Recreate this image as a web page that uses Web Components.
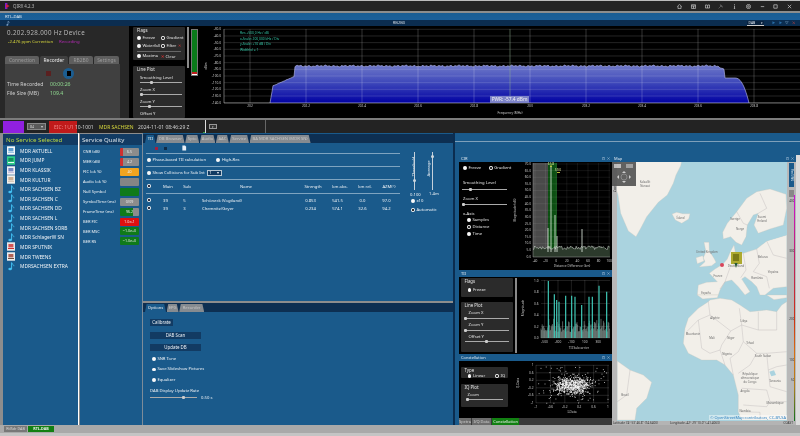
<!DOCTYPE html>
<html lang="en">
<head>
<meta charset="utf-8">
<title>QIRX 4.2.3</title>
<style>
  html, body { margin: 0; padding: 0; background: #c4c4c4; }
  body {
    width: 800px;
    height: 436px;
    overflow: hidden;
    display: flex;
    flex-direction: column;
    font-family: "Noto Sans", "Liberation Sans", sans-serif;
    font-size: 4.2px;
    color: #eeeeee;
    /* the reference is a scaled-down capture, everything in it is a little soft */
    filter: blur(0.3px);
  }
</style>
</head>
<body>
  <qx-title-bar title="QIRX 4.2.3"></qx-title-bar>
  <qx-device-bar title="RTL-DAB" chart="RB2B0"></qx-device-bar>
  <qx-top-panel></qx-top-panel>
  <qx-info-strip></qx-info-strip>
  <qx-workspace>
    <qx-service-list slot="services"></qx-service-list>
    <qx-quality slot="quality"></qx-quality>
    <qx-tii-tab slot="top"></qx-tii-tab>
    <qx-options-tab slot="bottom"></qx-options-tab>
    <qx-docks slot="docks"></qx-docks>
  </qx-workspace>
  <qx-status-bar></qx-status-bar>

<script>
// small seeded generator, so the charts come out the same on every run
const makeRandom = (seed) => () => {
  seed = (seed + 0x6d2b79f5) | 0;
  let t = Math.imul(seed ^ (seed >>> 15), 1 | seed);
  t = (t + Math.imul(t ^ (t >>> 7), 61 | t)) ^ t;
  return ((t ^ (t >>> 14)) >>> 0) / 4294967296;
};

const svgText = (x, y, text, attrs = "") =>
  `<text x="${x}" y="${y}" ${attrs}>${text}</text>`;

class QxElement extends HTMLElement {
  connectedCallback() {
    const root = this.shadowRoot ?? this.attachShadow({ mode: "open" });
    root.innerHTML = `<style>${this.styles()}</style>${this.markup()}`;
  }
  styles() {
    return ":host { display: block; }";
  }
  markup() {
    return "<slot></slot>";
  }
}

class QxRadio extends QxElement {
  styles() {
    return `
      :host { display: inline-flex; align-items: center; gap: 1.6px; line-height: 1; white-space: nowrap; }
      i { width: 3.8px; height: 3.8px; border-radius: 50%; background: #f8f8f8; display: block; flex: none; }
      i.on { background: radial-gradient(circle, #333 0 0.9px, #f4f4f4 1.2px); }
    `;
  }
  markup() {
    return `<i class="${this.hasAttribute("on") ? "on" : ""}"></i><slot></slot>`;
  }
}

class QxSlider extends QxElement {
  styles() {
    return `
      :host { display: block; height: 3px; position: relative; }
      b { position: absolute; left: 0; right: 0; top: 1px; height: 1px; background: #aaa; }
      i { position: absolute; top: 0; width: 3px; height: 3px; background: #ccc; border-radius: 1px; margin-left: -1.5px; }
    `;
  }
  markup() {
    return `<b></b><i style="left:${this.getAttribute("pos") ?? 0}%"></i>`;
  }
}

class QxGroup extends QxElement {
  styles() {
    return `
      :host { display: flex; flex-direction: column; background: #2b2b2b; border-radius: 1px; padding: 1px 4px; box-sizing: border-box; color: #e2e2e2; }
      h4 { margin: 0; font: inherit; font-size: 4.4px; line-height: 5px; }
    `;
  }
  markup() {
    return `<h4>${this.getAttribute("label") ?? ""}</h4><slot></slot>`;
  }
}

class QxTitleBar extends QxElement {
  styles() {
    return `
      :host { display: flex; height: 10px; align-items: center; background: #232323; border-top: 1px solid #bbb; border-bottom: 2px solid #8d8d8d; color: #b8b8b8; font-size: 4.4px; }
      .logo { margin-left: 5px; margin-right: 3px; width: 5px; height: 6px; }
      .tools { margin-left: auto; display: flex; margin-right: 8px; }
      .tools svg { width: 5px; height: 5px; margin-left: 8.75px; stroke: #c8c8c8; fill: none; stroke-width: .7; }
    `;
  }
  markup() {
    return `
      <svg class="logo" viewBox="0 0 5 6"><rect x="0" y="0" width="2.4" height="6" fill="#7a1fc8"/><path d="M1 1 L4.6 3 L1 5 Z" fill="#d02040"/></svg>
      ${this.getAttribute("title")}
      <div class="tools">
        <svg viewBox="0 0 5 5"><path d="M.4 2.4 2.5 .4 4.6 2.4M1 2v2.6h3V2"/></svg>
        <svg viewBox="0 0 5 5"><path d="M.4.8h4.2v3.6H.4zM.4 2h4.2M2.5 2v2.4"/></svg>
        <svg viewBox="0 0 5 5"><path d="M.4 1h1.8l.3.4.3-.4h1.8v3H.4zM2.5 1.4V4"/></svg>
        <svg viewBox="0 0 5 5" style="opacity:.45"><path d="M.6 4.4 3 2M3 2 2.2.8 3.8 1.6 4.4 3.2Z"/></svg>
        <svg viewBox="0 0 5 5"><path d="M2.5 0v.8M2.5 1.6v3.2M1.8 4.8h1.4"/></svg>
        <svg viewBox="0 0 5 5"><circle cx="2.5" cy="2.5" r="2.1"/><circle cx="2.5" cy="2.5" r=".8"/></svg>
        <svg viewBox="0 0 5 5"><path d="M.8 2.6h3.4"/></svg>
        <svg viewBox="0 0 5 5"><path d="M.8.8h3.4v3.4H.8z"/></svg>
        <svg viewBox="0 0 5 5"><path d="M.8.8l3.4 3.4M4.2.8.8 4.2"/></svg>
      </div>
    `;
  }
}

class QxDeviceBar extends QxElement {
  styles() {
    return `
      :host { display: block; color: #dfe8f0; }
      .top { height: 7px; line-height: 7px; padding-left: 5px; background: linear-gradient(#1a5d93, #1c609a); font-size: 4.2px; }
      .sub { height: 6px; background: #0b2d50; display: flex; align-items: center; position: relative; }
      .note { margin-left: 6px; width: 4px; height: 5px; }
      .chart { position: absolute; left: 399px; top: 0; line-height: 6px; transform: translateX(-50%); font-size: 4px; color: #cfd8e0; }
      .sel { margin-left: auto; width: 17px; height: 5px; box-sizing: border-box; border-bottom: .5px solid #ccc; background: #0a2340; font-size: 3.4px; line-height: 4.6px; display: flex; justify-content: space-between; padding: 0 1.5px; }
      .btns { display: flex; margin: 0 5px 0 8px; gap: 3px; }
      .btns svg { width: 3.5px; height: 3.5px; }
    `;
  }
  markup() {
    return `
      <div class="top">${this.getAttribute("title")}</div>
      <div class="sub">
        <svg class="note" viewBox="0 0 4 5"><path d="M2 .3v3.4" stroke="#9fc4e8" stroke-width=".5"/><path d="M2 .3 3.6 1.4" stroke="#9fc4e8" stroke-width=".5"/><ellipse cx="1.3" cy="3.9" rx=".9" ry=".7" fill="#9fc4e8"/></svg>
        <span class="chart">${this.getAttribute("chart")}</span>
        <span class="sel">DAB<span>▾</span></span>
        <span class="btns">
          <svg viewBox="0 0 4 4"><path d="M.5.3 3.5 2 .5 3.7Z" fill="#2a6fa8"/></svg>
          <svg viewBox="0 0 4 4"><path d="M.5.3 3.5 2 .5 3.7Z" fill="#2a6fa8"/></svg>
          <svg viewBox="0 0 4 4"><path d="M.3.5h3.4M.3.5 2 3.5 3.7.5" stroke="#6a90b0" fill="none" stroke-width=".5"/></svg>
          <svg viewBox="0 0 4 4"><path d="M.5.5l3 3M3.5.5l-3 3" stroke="#b04040" stroke-width=".6"/></svg>
        </span>
      </div>
    `;
  }
}

class QxTopPanel extends QxElement {
  styles() {
    return `
      :host { display: flex; height: 92px; background: #000; border-bottom: 2px solid #7c7c7c; }
      qx-device-panel { flex: none; width: 129px; }
      qx-flags-panel { flex: none; width: 60px; }
      qx-level-bar { flex: none; width: 10px; }
      qx-spectrum { flex: 1; }
    `;
  }
  markup() {
    return `<qx-device-panel></qx-device-panel><qx-flags-panel></qx-flags-panel><qx-level-bar></qx-level-bar><qx-spectrum></qx-spectrum>`;
  }
}

class QxDevicePanel extends QxElement {
  styles() {
    return `
      :host { display: flex; flex-direction: column; background: #282828; overflow: hidden; }
      .head { height: 30px; box-sizing: border-box; padding: 3px 0 0 7px; }
      .freq { font-size: 6.2px; line-height: 8px; color: #b6b6b6; letter-spacing: .34px; white-space: nowrap; }
      .ppm { font-size: 4.3px; line-height: 6px; margin: 1px 0 0 1px; color: #d8d83c; }
      .ppm span { color: #b52ab5; margin-left: 6px; }
      .tabs { display: flex; height: 8px; margin-left: 5px; gap: 1px; font-size: 4.9px; line-height: 8.5px; text-align: center; color: #9a9a9a; }
      .tabs div { background: #5e5e5e; border-radius: 2px 2px 0 0; }
      .tabs .on { background: #404040; color: #e8e8e8; }
      .body { flex: 1; margin: 0 9px 0 5px; background: #404040; padding: 3px 0 0 2px; }
      .icons { height: 13px; display: flex; align-items: center; padding-left: 39px; }
      .rec { width: 5px; height: 5px; background: #5a2020; }
      .stop { margin-left: 12px; width: 11px; height: 11px; border-radius: 50%; background: #1c5d90; display: flex; align-items: center; justify-content: center; }
      .stop i { width: 4px; height: 5px; background: #000; display: block; }
      .row { display: flex; font-size: 5.2px; line-height: 9px; color: #cfcfcf; margin-top: 0; }
      .row:first-of-type { margin-top: 3px; }
      .row b { font-weight: normal; width: 43px; }
      .row span { color: #8fd88f; }
    `;
  }
  markup() {
    return `
      <div class="head">
        <div class="freq">0.202.928.000 Hz Device</div>
        <div class="ppm">-2.476 ppm Correction<span>Recording</span></div>
      </div>
      <div class="tabs">
        <div style="width:34px">Connection</div>
        <div class="on" style="width:28px">Recorder</div>
        <div style="width:24px">RB2B0</div>
        <div style="width:25px">Settings</div>
      </div>
      <div class="body">
        <div class="icons"><div class="rec"></div><div class="stop"><i></i></div></div>
        <div class="row"><b>Time Recorded</b><span>00:00:26</span></div>
        <div class="row"><b>File Size (MB)</b><span>109.4</span></div>
      </div>
    `;
  }
}

class QxFlagsPanel extends QxElement {
  styles() {
    return `
      :host { display: flex; flex-direction: column; padding: 1px 0 0 4px; box-sizing: border-box; height: 92px; overflow: hidden; position: relative; }
      .flags { height: 36px; width: 52px; }
      .grid { display: grid; grid-template-columns: 24px 24px; row-gap: 4.4px; margin-top: 2.5px; }
      hr { border: 0; border-top: .5px solid #666; margin: 2.5px 0 2px; }
      .clear { color: #ddd; }
      .clear em { color: #d03030; font-style: normal; font-weight: bold; margin-right: .5px; }
      .line { margin-top: 6px; width: 52px; height: 60px; }
      .line span { display: block; line-height: 5px; margin: 3px 0 0 3px; }
      .line qx-slider { margin: 1px 0 0 3px; width: 42px; }
      .line span:first-of-type { margin-top: 3px; }
      .bar { position: absolute; left: 58px; top: 1px; width: 2px; height: 41px; background: #8a8a8a; }
    `;
  }
  markup() {
    return `
      <qx-group class="flags" label="Flags">
        <div class="grid">
          <qx-radio>Freeze</qx-radio><qx-radio on>Gradient</qx-radio>
          <qx-radio>Waterfall</qx-radio><qx-radio on>Filter <span style="color:#d03030">&#10005;</span></qx-radio>
        </div>
        <hr>
        <div class="grid" style="margin-top:0">
          <qx-radio>Maxima</qx-radio><span class="clear"><em>&#10005;</em> Clear</span>
        </div>
      </qx-group>
      <qx-group class="line" label="Line Plot">
        <span>Smoothing Level</span><qx-slider pos="28"></qx-slider>
        <span>Zoom X</span><qx-slider pos="3"></qx-slider>
        <span>Zoom Y</span><qx-slider pos="22"></qx-slider>
        <span>Offset Y</span>
      </qx-group>
      <div class="bar"></div>
    `;
  }
}

class QxLevelBar extends QxElement {
  styles() {
    return `
      :host { display: block; padding: 3px 0 0 2px; }
      div { width: 7px; height: 47px; box-sizing: border-box; background: #fff; border: .5px solid #777; display: flex; justify-content: flex-end; }
      i { width: 5.5px; height: 44px; display: block; background: linear-gradient(#0a7a1a 0 96%, #c02020 96%); }
    `;
  }
  markup() {
    return "<div><i></i></div>";
  }
}

class QxSpectrum extends QxElement {
  styles() {
    return `
      :host { display: block; position: relative; }
      svg { display: block; width: 601px; height: 92px; }
      text { font-family: "Noto Sans", "Liberation Sans", sans-serif; font-size: 3.2px; fill: #c8c8c8; }
      .info { fill: #35c8a8; font-size: 3.3px; }
      .pwr { position: absolute; left: 289px; top: 70px; width: 39px; height: 6.5px; background: #7d83c8; color: #f2f2f2; font-size: 4.8px; line-height: 6.5px; text-align: center; white-space: nowrap; }
    `;
  }
  edge(x) {
    const bump = Math.sin(x * 1.55) * 0.55 + Math.sin(x * 0.71 + 1) * 0.35 + Math.sin(x * 0.23) * 0.25;
    if (x < 271) return 103 - (x - 268) * 5.6;
    if (x < 293) return 86 - (x - 271) * 0.44 - Math.abs(bump) * 0.4;
    if (x < 717) return 66 + bump;
    if (x < 723) return 67 + (x - 717) * 0.45 + bump * 0.4;
    if (x < 733) return 78;
    return 78 + 25 * Math.pow((x - 733) / 14, 2.3);
  }
  markup() {
    let points = "268,103";
    for (let x = 269; x <= 747; x += 1) {
      points += ` ${x},${this.edge(x).toFixed(1)}`;
    }
    let grid = "";
    for (let i = 0; i < 12; i++) {
      const y = 29.3 + i * 6.67;
      grid += `<path d="M222 ${y}H800" stroke="#fff" stroke-opacity=".24" stroke-width=".6"/>`;
      grid += svgText(219, y + 1, `${-30 - i * 10}.0`, 'text-anchor="end"');
    }
    for (let i = 0; i < 10; i++) {
      const x = 248 + i * 56;
      grid += `<path d="M${x} 29V103" stroke="#fff" stroke-opacity=".34" stroke-width=".6"/>`;
      grid += svgText(x, 107, i === 5 ? "203" : (202 + i * 0.2).toFixed(1).replace(/\.0$/, ""), 'text-anchor="middle"');
    }
    return `
      <svg viewBox="199 26 601 92">
        <defs><linearGradient id="fill" x1="0" y1="66" x2="0" y2="103" gradientUnits="userSpaceOnUse">
          <stop offset="0" stop-color="#6c76c8"/><stop offset=".45" stop-color="#3e48ba"/><stop offset="1" stop-color="#0000a2"/>
        </linearGradient></defs>
        <polygon points="${points} 747,103" fill="url(#fill)"/>
        <polyline points="${points}" fill="none" stroke="#a6a9dc" stroke-width=".7"/>
        ${grid}
        <path d="M508 29V103" stroke="#8fae8f" stroke-width=".5"/>
        <path d="M222 29V103H800" fill="none" stroke="#cfcfcf" stroke-width=".5"/>
        ${svgText(238, 34, "Res +500,0 Hz / dB", 'class="info"')}
        ${svgText(238, 39.5, "x-Scale: 200,000 kHz / Div", 'class="info"')}
        ${svgText(238, 45, "y-Scale: +10 dB / Div", 'class="info"')}
        ${svgText(238, 50.5, "Width(x) = 1", 'class="info"')}
        ${svgText(205, 66, "dBm", 'transform="rotate(-90 205 66)" text-anchor="middle"')}
        ${svgText(508, 114, "Frequency (MHz)", 'text-anchor="middle"')}
      </svg>
      <div class="pwr">PWR: -57.4 dBm</div>
    `;
  }
}

class QxInfoStrip extends QxElement {
  styles() {
    return `
      :host { display: flex; height: 13px; box-sizing: border-box; background: #232323; align-items: center; font-size: 5px; color: #cfcfcf; white-space: nowrap; }
      .purple { width: 21px; height: 12px; margin-left: 3px; background: #9020e0; flex: none; }
      .sel { width: 19px; height: 7px; margin-left: 3px; background: #5a5a5a; border: .5px solid #888; box-sizing: border-box; font-size: 3.6px; line-height: 6px; display: flex; justify-content: space-between; padding: 0 2px; flex: none; }
      .eic { width: 45px; height: 12px; margin-left: 3px; padding-left: 5px; line-height: 12px; background: linear-gradient(#c01a1a, #c01a1a) no-repeat 0 0 / 28px 100%; flex: none; }
      .eic b { font-weight: normal; color: #ef8888; }
      .ens { width: 39px; color: #d8d83c; flex: none; }
      .date { width: 64px; flex: none; padding-right: 3px; position: relative; }
      .dot { position: absolute; right: 0; bottom: -4px; width: 2px; height: 2px; background: #3aa03a; }
      .wall { width: 1px; height: 13px; background: #ddd; flex: none; }
      .small { width: 8px; height: 5px; margin-left: 3px; background: #333; border: .5px solid #999; box-sizing: border-box; font-size: 3px; line-height: 4px; text-align: center; flex: none; }
      .line { width: 1px; height: 13px; background: #666; margin-left: 48px; flex: none; }
    `;
  }
  markup() {
    return `
      <div class="purple"></div>
      <div class="sel">84<span>▾</span></div>
      <div class="eic"><b>EIC: 1U1</b> 10-1001</div>
      <div class="ens">MDR SACHSEN</div>
      <div class="date">2024-11-01 08:46:29 Z<i class="dot"></i></div>
      <div class="wall"></div>
      <div class="small">▾</div>
      <div class="line"></div>
    `;
  }
}

class QxWorkspace extends QxElement {
  styles() {
    return `
      :host { display: flex; height: 292px; background: #8d8d8d; box-sizing: border-box; padding-left: 3px; }
      .list { width: 75px; flex: none; }
      .wall { width: 1px; background: #fff; flex: none; margin-right: 1px; }
      .quality { width: 62px; flex: none; border-right: 1px solid #7d8c99; }
      .center { width: 310px; flex: none; display: flex; flex-direction: column; }
      .gap { width: 2px; flex: none; background: #0b2d50; }
      .docks { flex: 1; }
      ::slotted(qx-tii-tab) { height: 168px; flex: none; }
      ::slotted(qx-options-tab) { flex: 1; margin-top: 2px; }
    `;
  }
  markup() {
    return `
      <div class="list"><slot name="services"></slot></div>
      <div class="wall"></div>
      <div class="quality"><slot name="quality"></slot></div>
      <div class="center"><slot name="top"></slot><slot name="bottom"></slot></div>
      <div class="gap"></div>
      <div class="docks"><slot name="docks"></slot></div>
    `;
  }
}

const SERVICES = [
  ["MDR AKTUELL", "aktuell"],
  ["MDR JUMP", "jump"],
  ["MDR KLASSIK", "klassik"],
  ["MDR KULTUR", "kultur"],
  ["MDR SACHSEN BZ", "note"],
  ["MDR SACHSEN C", "note"],
  ["MDR SACHSEN DD", "note"],
  ["MDR SACHSEN L", "note"],
  ["MDR SACHSEN SORB", "note"],
  ["MDR SchlagerW SN", "note"],
  ["MDR SPUTNIK", "sputnik"],
  ["MDR TWEENS", "tweens"],
  ["MDRSACHSEN EXTRA", "note"],
];

const serviceIcon = (kind) => {
  if (kind === "note") {
    return `<svg viewBox="0 0 8 9"><path d="M4.6.6V7" stroke="#43c0f2" stroke-width="1"/><path d="M4.6.6C5 2.4 7 2.4 6.9 4.2" fill="none" stroke="#43c0f2" stroke-width=".8"/><ellipse cx="3.1" cy="7" rx="1.8" ry="1.3" fill="#43c0f2"/></svg>`;
  }
  const looks = {
    aktuell: ["#f4f8fb", "#3a8ac8", "#9ac4e4"],
    jump: ["#2fd08a", "#0f7a50", "#e8fff4"],
    klassik: ["#f2f0f4", "#5a70b8", "#c8c0d8"],
    kultur: ["#f4f0ea", "#c0a080", "#d8c8b8"],
    sputnik: ["#e8e8e8", "#d03030", "#d03030"],
    tweens: ["#eeeeee", "#a04030", "#705040"],
  }[kind];
  return `<svg viewBox="0 0 8 9"><rect width="8" height="8.4" y=".3" fill="${looks[0]}"/><rect x="1.4" y="2" width="5" height="3.4" fill="${looks[1]}" opacity=".8"/><rect x="1" y="6" width="6" height="1" fill="${looks[2]}"/></svg>`;
};

class QxServiceList extends QxElement {
  styles() {
    return `
      :host { display: block; height: 100%; background: #1a5a8b; }
      h3 { margin: 0; height: 11px; background: #123b63; color: #b9d640; font-weight: normal; font-size: 6.15px; line-height: 11px; padding: 0 0 0 3px; white-space: nowrap; margin-top: 1px; }
      ul { list-style: none; margin: 0; padding: 0 0 0 4px; padding-top: 1px; }
      li { height: 9.62px; display: flex; align-items: center; font-size: 4.85px; color: #f2f5f8; white-space: nowrap; }
      svg { width: 8px; height: 9px; margin-right: 5px; flex: none; }
    `;
  }
  markup() {
    return `
      <h3>No Service Selected</h3>
      <ul>${SERVICES.map(([name, icon]) => `<li>${serviceIcon(icon)}${name}</li>`).join("")}</ul>
    `;
  }
}

const QUALITY = [
  ["CNR (dB)", "6.5", "#8c8c8c", "#d03030 0 16%"],
  ["MER (dB)", "4.2", "#8c8c8c", "#d03030 0 16%"],
  ["FIC (ok %)", "40", "#f0a420"],
  ["Audio (ok %)", "", "#858585"],
  ["Null Symbol", "", "#0f7a1a"],
  ["SymbolTime (ms)", "0/09", "#8c8c8c"],
  ["FrameTime (ms)", "96.2", "#0f7a1a", "#8c8c8c 70% 100%"],
  ["BER FIC", "1.0e-1", "#e01010"],
  ["BER MSC", "~1.0e+0", "#0f7a1a"],
  ["BER RS", "~1.0e+0", "#0f7a1a"],
];

class QxQuality extends QxElement {
  styles() {
    return `
      :host { display: block; height: 100%; background: #1a5a8b; }
      h3 { margin: 1px 0 0; height: 11px; background: #123b63; color: #d8e0e6; font-weight: normal; font-size: 6.1px; line-height: 11px; padding-left: 2px; white-space: nowrap; }
      .row { height: 9.95px; display: flex; align-items: center; padding-left: 3px; font-size: 4.05px; color: #eef2f6; white-space: nowrap; }
      .row:first-of-type { margin-top: 2px; }
      .row span { width: 37px; flex: none; }
      .row b { width: 19px; height: 8px; font-weight: normal; text-align: center; line-height: 8px; font-size: 3.6px; color: #e8e8e8; border-radius: 1px; }
    `;
  }
  bar([, value, color, overlay]) {
    const bg = overlay
      ? overlay.startsWith("#d0")
        ? `background: linear-gradient(90deg, ${overlay}, ${color} 16%)`
        : `background: linear-gradient(90deg, ${color} 0 70%, ${overlay})`
      : `background: ${color}`;
    return `<b style="${bg}">${value}</b>`;
  }
  markup() {
    return `
      <h3>Service Quality</h3>
      ${QUALITY.map((row) => `<div class="row"><span>${row[0]}</span>${this.bar(row)}</div>`).join("")}
    `;
  }
}

class QxTabs extends QxElement {
  styles() {
    return `
      :host { display: flex; background: #0d2f52; padding: 1px 0 0 2px; height: 8px; font-size: 4.2px; line-height: 8.5px; color: #c6c6c6; }
      div { text-align: center; clip-path: polygon(1.6px 0, calc(100% - 1.8px) 0, 100% 100%, 0 100%); background: #868b90; margin-right: .6px; white-space: nowrap; overflow: hidden; }
      div.on { background: #1a5a8b; color: #f0f0f0; }
    `;
  }
  markup() {
    const tabs = JSON.parse(this.getAttribute("tabs"));
    return tabs
      .map(([label, width], i) => `<div class="${i === 0 ? "on" : ""}" style="width:${width}px">${label}</div>`)
      .join("");
  }
}

class QxTiiTab extends QxElement {
  styles() {
    return `
      :host { display: flex; flex-direction: column; background: #1a5a8b; position: relative; color: #eef2f6; overflow: hidden; }
      .bar { margin-top: 1px; }
      .tools { height: 10px; display: flex; align-items: center; padding-left: 12px; gap: 6px; }
      .tools i { display: block; width: 3px; height: 3px; }
      .tools svg { width: 4.5px; height: 6px; margin-left: 9px; }
      .section { width: 254px; margin-left: 3px; border-top: .6px solid #7ea4c0; height: 13px; display: flex; align-items: center; padding-left: 1px; box-sizing: border-box; white-space: nowrap; }
      .section qx-radio + qx-radio { margin-left: 10.5px; }
      .sel { margin-left: 2px; width: 15px; height: 5.5px; border: .5px solid #b8c8d4; background: #123b63; box-sizing: border-box; line-height: 4.5px; display: flex; justify-content: space-between; padding: 0 1.5px; }
      table { width: 254px; margin-left: 3px; border-collapse: collapse; border-top: .6px solid #7ea4c0; table-layout: fixed; }
      th, td { font-weight: normal; text-align: center; padding: 0; white-space: nowrap; }
      th { height: 13px; border-bottom: .6px solid #7ea4c0; }
      td { height: 8px; padding-right: 5px; }
      th:first-child, td:first-child { text-align: left; padding: 0 0 0 1px; }
      .gap td { height: 2.5px; }
      td.name { text-align: left; padding: 0 0 0 8px; }
      .check { display: inline-block; width: 3.8px; height: 3.8px; border-radius: 50%; background: radial-gradient(circle, #334 0 .9px, #f2f2f2 1.2px); }
      .side { position: absolute; left: 265px; top: 18px; width: 40px; height: 80px; }
      .side span { position: absolute; white-space: nowrap; }
      .v { transform: rotate(-90deg); transform-origin: center; }
      .track { position: absolute; width: .8px; height: 38px; top: 1px; background: #c4d0da; }
      .knob { position: absolute; width: 3px; height: 3px; background: #cfd8de; border-radius: 50%; margin-left: -1.1px; }
    `;
  }
  markup() {
    const rows = [
      ["39", "5", "Schöneck (Vogtland)", "0.853", "541.5", "0.0", "97.0"],
      ["39", "3", "Chemnitz/Geyer", "0.234", "574.1", "32.6", "94.2"],
    ];
    const tabs = [["TII", 10.5], ["DB Browser", 28.5], ["Spto", 14], ["Audio", 15.5], ["AAC", 13], ["Service", 19.5], ["BA MDR SACHSEN (MDR SN)", 61]];
    return `
      <qx-tabs class="bar" tabs='${JSON.stringify(tabs)}'></qx-tabs>
      <div class="tools">
        <i style="background:#a02040"></i><i style="background:#0f2c48"></i>
        <svg viewBox="0 0 5 6"><path d="M.4.2h3l1.2 1.4v4.2H.4z" fill="#e8f0f8"/></svg>
      </div>
      <div class="section"><qx-radio>Phase-based TII calculation</qx-radio><qx-radio>High-Res</qx-radio></div>
      <div class="section"><qx-radio>Show Collisions for Sub Int</qx-radio><span class="sel">1<span>▾</span></span></div>
      <table>
        <colgroup><col style="width:10px"><col style="width:24px"><col style="width:14px"><col style="width:104px"><col style="width:30px"><col style="width:24px"><col style="width:26px"><col style="width:22px"></colgroup>
        <thead><tr><th><i class="check"></i></th><th>Main</th><th>Sub</th><th>Name</th><th>Strength</th><th>km abs.</th><th>km rel.</th><th>AZM(°)</th></tr></thead>
        <tbody>
          <tr class="gap"><td colspan="8"></td></tr>
          ${rows.map((r) => `<tr><td><i class="check"></i></td><td>${r[0]}</td><td>${r[1]}</td><td class="name">${r[2]}</td><td>${r[3]}</td><td>${r[4]}</td><td>${r[5]}</td><td>${r[6]}</td></tr>`).join("")}
        </tbody>
      </table>
      <div class="side">
        <span class="v" style="left:-4px;top:13px">Threshold</span>
        <span class="v" style="left:12px;top:15px">Average</span>
        <i class="track" style="left:6px"></i><i class="knob" style="left:6px;top:28px"></i>
        <i class="track" style="left:24px"></i><i class="knob" style="left:24px;top:4px"></i>
        <span style="left:2px;top:41px">0.100</span>
        <span style="left:21px;top:40px">1.4m</span>
        <qx-radio style="position:absolute;left:3px;top:48px">x10</qx-radio>
        <qx-radio on style="position:absolute;left:3px;top:57px">Automatic</qx-radio>
      </div>
    `;
  }
}

class QxOptionsTab extends QxElement {
  styles() {
    return `
      :host { display: flex; flex-direction: column; background: #1a5a8b; color: #eef2f6; }
      .body { padding: 7px 0 0 7px; display: flex; flex-direction: column; }
      button { display: block; font: inherit; color: #eef2f6; background: #123b63; border: 0; height: 7px; line-height: 7px; padding: 0; text-align: center; }
      .wide { width: 51px; margin-top: 5px; font-size: 4.4px; }
      qx-radio { height: 10.4px; margin-left: 2px; }
      .rate { margin-top: 3px; line-height: 5px; }
      .rate-row { display: flex; align-items: center; margin-top: 1.5px; }
      qx-slider { width: 47px; }
      .rate-row span { margin-left: 4px; }
    `;
  }
  markup() {
    const tabs = [["Options", 21], ["EPG", 12], ["Recorder", 25]];
    return `
      <qx-tabs tabs='${JSON.stringify(tabs)}'></qx-tabs>
      <div class="body">
        <button style="width:23px;font-size:4.4px">Calibrate</button>
        <button class="wide" style="margin-top:6px">DAB Scan</button>
        <button class="wide">Update DB</button>
        <qx-radio style="margin-top:3px">SNR Tone</qx-radio>
        <qx-radio>Save Slideshow Pictures</qx-radio>
        <qx-radio>Equalizer</qx-radio>
        <div class="rate">DAB Display Update Rate</div>
        <div class="rate-row"><qx-slider pos="72"></qx-slider><span>0.50 s</span></div>
      </div>
    `;
  }
}

class QxDock extends QxElement {
  styles() {
    return `
      :host { display: flex; flex-direction: column; background: #000; overflow: hidden; }
      header { height: 7px; flex: none; background: #1a5a8b; display: flex; align-items: center; padding: 0 2px 0 2px; font-size: 4px; color: #dfe8f0; }
      header svg { width: 3px; height: 3px; margin-left: 2px; }
      header svg:first-of-type { margin-left: auto; }
      .body { flex: 1; min-height: 0; display: flex; }
    `;
  }
  markup() {
    return `
      <header>${this.getAttribute("label")}
        <svg viewBox="0 0 3 3"><path d="M.3.8h2.4v2H.3zM.8.8V.2h1.4v.6" fill="none" stroke="#b8d0e4" stroke-width=".4"/></svg>
        <svg viewBox="0 0 3 3"><path d="M.3.3l2.4 2.4M2.7.3.3 2.7" stroke="#b8d0e4" stroke-width=".4"/></svg>
      </header>
      <div class="body"><slot></slot></div>
    `;
  }
}

class QxDocks extends QxElement {
  styles() {
    return `
      :host { display: flex; flex-direction: column; height: 100%; background: #1a5a8b; }
      .ribbon { height: 22px; flex: none; background: linear-gradient(#1a5a8b 0 8px, #7ea0ba 8px 9px, #1a5a8b 9px); }
      .row { flex: 1; display: flex; padding-left: 4px; min-height: 0; }
      .left { width: 153px; flex: none; display: flex; flex-direction: column; }
      .map { width: 184px; flex: none; }
      .rest { flex: 1; background: #dcdcdc; }
      .cir { height: 115px; flex: none; }
      .tii { height: 84px; flex: none; }
      .con { height: 64px; flex: none; }
      .tabs { height: 7px; flex: none; background: #3a3a3a; display: flex; font-size: 4px; line-height: 7px; color: #cfcfcf; text-align: center; }
      .tabs div { background: #6c6c6c; margin-right: 1px; }
      .tabs .on { background: #128012; color: #f4f4f4; }
    `;
  }
  markup() {
    return `
      <div class="ribbon"></div>
      <div class="row">
        <div class="left">
          <qx-dock class="cir" label="CIR"><qx-cir></qx-cir></qx-dock>
          <qx-dock class="tii" label="TII"><qx-tii-plot></qx-tii-plot></qx-dock>
          <qx-dock class="con" label="Constellation"><qx-constellation></qx-constellation></qx-dock>
          <div class="tabs"><div style="width:12px">Spctra</div><div style="width:19px">I/Q Data</div><div class="on" style="width:27px">Constellation</div></div>
        </div>
        <qx-dock class="map" label="Map"><qx-map></qx-map></qx-dock>
        <div class="rest"></div>
      </div>
    `;
  }
}

const PLOT_TEXT = `text { font-family: "Noto Sans", "Liberation Sans", sans-serif; font-size: 3.2px; fill: #c4c4c4; }`;

class QxCir extends QxElement {
  styles() {
    return `
      :host { display: flex; width: 153px; height: 108px; }
      .ctl { width: 53px; flex: none; padding: 3px 0 0 4px; box-sizing: border-box; color: #e2e2e2; display: flex; flex-direction: column; }
      .ctl > div { line-height: 5px; }
      qx-slider { width: 45px; margin-top: 2.5px; margin-left: -1px; }
      .rad { display: flex; gap: 7.6px; height: 6px; align-items: center; }
      .col { display: flex; flex-direction: column; gap: 2.6px; margin: 2px 0 0 4px; }
      svg { display: block; width: 100px; height: 108px; }
      ${PLOT_TEXT}
    `;
  }
  plot() {
    const rand = makeRandom(7);
    let floor = "";
    for (let x = 533; x <= 610; x += 0.8) {
      floor += `${x.toFixed(1)},${(249.5 - rand() * 3.6).toFixed(1)} `;
    }
    let grid = "";
    for (let i = 0; i < 15; i++) {
      const y = 164 + i * 6.62;
      grid += `<path d="M533 ${y}H610" stroke="#fff" stroke-opacity=".18" stroke-width=".4"/>`;
      grid += svgText(531, y + 1, (70 - i * 5).toFixed(1), 'text-anchor="end"');
    }
    for (let i = 0; i < 8; i++) {
      const x = 535 + i * 10.6;
      grid += `<path d="M${x} 163V257" stroke="#fff" stroke-opacity=".18" stroke-width=".4"/>`;
      grid += svgText(x, 261.5, -40 + i * 20, 'text-anchor="middle"');
    }
    const peak = (x, y) => `<path d="M${x} 252V${y}" stroke="#e4f0e4" stroke-width=".8"/>`;
    return `
      <svg viewBox="512 162 100 108">
        <rect x="533" y="163" width="15" height="94" fill="#4a4a4a"/>
        <rect x="548" y="163" width="9" height="94" fill="#0c4f12"/>
        ${grid}
        <polygon points="533,257 ${floor} 610,257" fill="#2c3a2c"/>
        <polyline points="${floor}" fill="none" stroke="#e0e8e0" stroke-width=".5"/>
        ${peak(551, 166)}${peak(555, 215)}${peak(557, 236)}${peak(548, 228)}${peak(582, 229)}
        <path d="M533 163V257H610" stroke="#bbb" stroke-width=".4" fill="none"/>
        <rect x="550" y="165.6" width="2" height="1" fill="#e8e840"/>
        <rect x="557" y="172" width="3" height=".8" fill="#e8e840"/>
        ${svgText(551, 165, "65.8", 'text-anchor="middle" style="fill:#dfe8a0"')}
        ${svgText(558, 171, "59.0", 'text-anchor="middle" style="fill:#dfe8a0"')}
        ${svgText(515.5, 210, "Magnitude (dB)", 'transform="rotate(-90 515.5 210)" text-anchor="middle"')}
        ${svgText(572, 267, "Distance Difference (km)", 'text-anchor="middle"')}
      </svg>
    `;
  }
  markup() {
    return `
      <div class="ctl">
        <div class="rad"><qx-radio>Freeze</qx-radio><qx-radio on>Gradient</qx-radio></div>
        <div style="margin-top:9px">Smoothing Level</div><qx-slider pos="18"></qx-slider>
        <div style="margin-top:5px">Zoom X</div><qx-slider pos="3"></qx-slider>
        <div style="margin-top:5px">x-Axis</div>
        <div class="col"><qx-radio>Samples</qx-radio><qx-radio on>Distance</qx-radio><qx-radio>Time</qx-radio></div>
      </div>
      ${this.plot()}
    `;
  }
}

class QxTiiPlot extends QxElement {
  styles() {
    return `
      :host { display: flex; width: 153px; height: 77px; }
      .ctl { width: 57px; flex: none; padding: 1px 0 0 1.5px; box-sizing: border-box; display: flex; flex-direction: column; position: relative; }
      .flags { width: 52px; height: 19px; }
      .flags qx-radio { margin: 3.5px 0 0 3px; }
      .line { width: 52px; height: 50px; margin-top: 5px; }
      .line span { line-height: 5px; margin: 2.4px 0 0 4px; display: block; }
      .line qx-slider { margin: 1.4px 0 0 0; width: 44px; }
      .bar { position: absolute; left: 55.6px; top: 1px; width: 2px; bottom: 1px; background: #8a8a8a; }
      svg { display: block; width: 96px; height: 77px; }
      ${PLOT_TEXT}
    `;
  }
  plot() {
    const rand = makeRandom(21);
    let noise = "";
    for (let x = 541; x < 610; x += 0.6) {
      const h = 6 + rand() * rand() * 18;
      noise += `<path d="M${x.toFixed(1)} 338v${(-h).toFixed(1)}" stroke="#8c9c98" stroke-width=".6"/>`;
    }
    const bars = [[280, 48], [298, 88], [305, 105], [312, 110], [332, 92], [350, 92], [360, 95], [380, 120], [402, 95], [412, 95], [432, 62], [455, 80]];
    const teal = bars.map(([zx, zy]) => `<path d="M${455 + zx / 3} 338V${265 + zy / 3}" stroke="#3fc8b6" stroke-width="1.2"/>`).join("");
    let grid = "";
    [1.0, 0.8, 0.6, 0.4, 0.2, 0.0].forEach((v, i) => {
      const y = 280.5 + i * 11.5;
      grid += `<path d="M541 ${y}H610" stroke="#fff" stroke-opacity=".3" stroke-width=".4"/>`;
      grid += svgText(538.5, y + 1, v.toFixed(1), 'text-anchor="end"');
    });
    [-500, -300, -100, 100, 300].forEach((v, i) => {
      const x = 544.6 + i * 13.4;
      grid += `<path d="M${x} 280V338" stroke="#fff" stroke-opacity=".3" stroke-width=".4"/>`;
      grid += svgText(x, 342.5, v, 'text-anchor="middle"');
    });
    return `
      <svg viewBox="516 277 96 77">
        ${grid}${noise}${teal}
        ${svgText(524, 308, "Magnitude", 'transform="rotate(-90 524 308)" text-anchor="middle"')}
        ${svgText(579, 349, "TII Subcarrier", 'text-anchor="middle"')}
      </svg>
    `;
  }
  markup() {
    return `
      <div class="ctl">
        <qx-group class="flags" label="Flags"><qx-radio>Freeze</qx-radio></qx-group>
        <qx-group class="line" label="Line Plot">
          <span>Zoom X</span><qx-slider pos="3"></qx-slider>
          <span>Zoom Y</span><qx-slider pos="3"></qx-slider>
          <span>Offset Y</span><qx-slider pos="50"></qx-slider>
        </qx-group>
        <div class="bar"></div>
      </div>
      ${this.plot()}
    `;
  }
}

class QxConstellation extends QxElement {
  styles() {
    return `
      :host { display: flex; width: 153px; height: 57px; }
      .ctl { width: 57px; flex: none; padding: 6px 0 0 1.5px; box-sizing: border-box; display: flex; flex-direction: column; }
      .type { width: 47px; height: 11px; }
      .type div { display: flex; gap: 10px; margin: 1px 0 0 3px; }
      .iq { width: 47px; height: 23px; margin-top: 6px; }
      .iq span { display: block; line-height: 5px; margin: 2px 0 0 3px; }
      .iq qx-slider { margin: 1px 0 0 2px; width: 36px; }
      svg { display: block; width: 96px; height: 57px; }
      ${PLOT_TEXT}
    `;
  }
  plot() {
    const rand = makeRandom(42);
    const gauss = () => (rand() + rand() + rand() + rand() - 2) * 1.7;
    let dots = "";
    for (let i = 0; i < 820; i++) {
      const wide = i < 90;
      const cx = i % 2 ? 566 : 579;
      const x = wide ? 538 + rand() * 70 : cx + gauss() * 6.5;
      const y = wide ? 366 + rand() * 37 : 385 + gauss() * 4.2;
      dots += `<rect x="${x.toFixed(1)}" y="${y.toFixed(1)}" width=".8" height=".8" fill="#f6f6f6"/>`;
    }
    let grid = "";
    ["1", "0.6", "0.2", "-0.2", "-0.6", "-1"].forEach((v, i) => {
      const y = 365.3 + i * 7.5;
      grid += `<path d="M536 ${y}H609" stroke="#fff" stroke-opacity=".45" stroke-width=".3"/>`;
      grid += svgText(533.5, y + 1, v, 'text-anchor="end"');
    });
    ["-1", "-0.6", "-0.2", "0.2", "0.6", "1"].forEach((v, i) => {
      const x = 536 + i * 14.4;
      grid += `<path d="M${x} 365V403" stroke="#fff" stroke-opacity=".45" stroke-width=".3"/>`;
      grid += svgText(x, 407.5, v, 'text-anchor="middle"');
    });
    return `
      <svg viewBox="516 361 96 57">
        ${grid}${dots}
        ${svgText(518.5, 383, "Q-Data", 'transform="rotate(-90 518.5 383)" text-anchor="middle"')}
        ${svgText(572, 413, "I-Data", 'text-anchor="middle"')}
      </svg>
    `;
  }
  markup() {
    return `
      <div class="ctl">
        <qx-group class="type" label="Type"><div><qx-radio>Linear</qx-radio><qx-radio on>IQ</qx-radio></div></qx-group>
        <qx-group class="iq" label="IQ Plot"><span>Zoom</span><qx-slider pos="3"></qx-slider></qx-group>
      </div>
      ${this.plot()}
    `;
  }
}

// coastlines read off the zoomed reference: zoom a starts at 610,145 and zoom b at 610,295, both 3x
const fromA = (pts) => pts.map(([x, y]) => `${(610 + x / 3).toFixed(1)},${(145 + y / 3).toFixed(1)}`).join(" ");
const fromB = (pts) => pts.map(([x, y]) => `${(610 + x / 3).toFixed(1)},${(295 + y / 3).toFixed(1)}`).join(" ");

const MAP_LAND = [
  // greenland
  fromA([[15, 48], [215, 48], [212, 62], [198, 90], [190, 115], [172, 150], [145, 172], [110, 215], [92, 250], [78, 275], [55, 258], [32, 205], [24, 150], [15, 120]]),
  // iceland
  fromA([[186, 207], [200, 202], [218, 206], [240, 206], [236, 222], [215, 235], [196, 225]]),
  // great britain and ireland
  fromA([[282, 292], [297, 292], [298, 318], [312, 340], [318, 352], [305, 362], [268, 366], [285, 350], [280, 338], [288, 320]]),
  fromA([[258, 338], [278, 332], [282, 348], [262, 356]]),
  // scandinavia and finland
  fromA([[340, 282], [338, 262], [352, 235], [380, 200], [410, 160], [440, 140], [480, 132], [528, 148], [530, 190], [520, 240], [480, 252], [445, 265], [432, 240], [445, 205], [430, 210], [412, 240], [408, 275], [395, 300], [378, 292], [362, 275]]),
  // mainland europe down to the mediterranean
  fromA([[362, 318], [372, 300], [376, 322], [400, 325], [440, 312], [470, 288], [530, 270], [530, 425], [490, 430], [465, 450], [450, 450], [440, 425], [425, 410], [405, 395], [395, 402], [420, 440], [405, 450], [385, 425], [365, 405], [345, 410], [330, 435], [325, 450], [262, 450], [265, 420], [290, 412], [322, 410], [298, 385], [315, 372], [338, 358], [352, 342]]),
  // iberia, turkey and africa in the lower half
  fromB([[262, 0], [325, 0], [322, 8], [300, 10], [278, 12]]),
  fromB([[470, 0], [530, 0], [530, 8], [492, 14]]),
  fromB([[300, 15], [330, 10], [365, 15], [390, 30], [420, 50], [470, 45], [500, 50], [515, 30], [530, 20], [530, 375], [395, 375], [385, 350], [385, 300], [370, 240], [345, 210], [320, 195], [275, 195], [235, 175], [220, 145], [225, 100], [235, 70], [265, 40], [295, 20]]),
  // brazil
  fromB([[22, 198], [60, 225], [100, 240], [125, 262], [110, 310], [80, 340], [75, 375], [22, 375]]),
];

const MAP_LAKES = [
  fromB([[478, 230], [492, 226], [498, 240], [484, 244]]),
  fromA([[455, 300], [470, 288], [530, 270], [530, 262], [478, 275]]),
];

const MAP_BORDERS = [
  fromA([[360, 368], [345, 410], [330, 432]]), fromA([[400, 325], [408, 375], [392, 398]]),
  fromA([[440, 312], [448, 355], [430, 380], [470, 395], [478, 430]]), fromA([[470, 288], [490, 330], [530, 340]]),
  fromA([[380, 200], [400, 235], [412, 240]]), fromA([[450, 145], [470, 190], [445, 205]]),
  fromB([[295, 20], [300, 60], [265, 75], [230, 110]]), fromB([[300, 60], [362, 108], [395, 90], [388, 40]]),
  fromB([[265, 75], [275, 160], [300, 175], [330, 165], [345, 210]]), fromB([[362, 108], [335, 150], [330, 165]]),
  fromB([[395, 90], [445, 105], [445, 50]]), fromB([[445, 105], [500, 105], [500, 50]]),
  fromB([[395, 90], [400, 140], [385, 170], [360, 190], [370, 240]]), fromB([[400, 140], [440, 175], [470, 175], [530, 170]]),
  fromB([[440, 175], [420, 210], [385, 235]]), fromB([[470, 175], [475, 225], [500, 215], [530, 210]]),
  fromB([[475, 225], [480, 275], [530, 290]]), fromB([[395, 280], [470, 285], [480, 320], [530, 320]]),
  fromB([[400, 330], [470, 335], [480, 320]]), fromB([[390, 350], [450, 352], [450, 375]]),
  fromB([[60, 225], [50, 300], [22, 320]]),
];

const MAP_LABELS = [
  [645, 183, "Kalaallit"], [645, 187, "Nunaat"], [680.5, 219, "Ísland"], [735, 220, "Sverige"],
  [762, 218, "Suomi"], [762, 221.5, "Finland"], [740, 230, "Norge"],
  [707, 253, "United Kingdom"], [763, 258, "Belarus"], [718, 277, "France"], [773, 273, "Україна"],
  [757, 279, "România"], [706, 294, "España"], [736, 266.5, "Deutschland"], [715, 319, "Algérie"],
  [693, 335, "Mauritanie"], [712, 339, "Mali"], [731, 339, "Niger"], [750, 344, "Tchad"],
  [727, 355, "Nigeria"], [763, 357, "South Sudan"], [750, 375, "République"], [750, 379, "démocratique"],
  [750, 383, "du Congo"], [775, 382, "Tanzania"], [745, 392, "Angola"], [775, 404, "Mozambique"],
  [745, 412, "Namibia"], [625, 396, "Brasil"], [744, 322, "Libya"],
];

class QxMap extends QxElement {
  styles() {
    return `
      :host { display: flex; flex-direction: column; width: 184px; height: 264px; background: #b4b4b4; position: relative; }
      .view { display: flex; height: 259px; flex: none; position: relative; }
      .edge { width: 5px; flex: none; background: #b8b8b8; position: relative; }
      .edge span { position: absolute; left: -1px; top: 24px; font-size: 3px; color: #333; transform: rotate(-90deg); }
      .scale { width: 9px; flex: none; background: #b8b8b8; position: relative; font-size: 3px; color: #333; }
      .scale span { position: absolute; right: 1.5px; }
      .scale i { position: absolute; right: 1px; top: 33px; bottom: 0; width: .8px; background: linear-gradient(#d010d8, #c02060 30%, #d03010 55%, #d87010 70%, #b0801a 85%, #107020); }
      .pan { position: absolute; right: 2px; top: 1px; width: 5px; height: 24px; background: #1a5a8b; color: #e8eff4; font-size: 2.6px; writing-mode: vertical-rl; text-align: center; line-height: 5px; }
      .btn { position: absolute; right: 2px; top: 28px; width: 5px; height: 7px; background: #888; }
      svg { display: block; width: 170px; height: 259px; flex: none; }
      svg text { font-family: "Noto Sans", "Liberation Sans", sans-serif; font-size: 2.8px; fill: #6b6b6b; text-anchor: middle; }
      .nav { position: absolute; left: 0; top: 0; width: 24px; height: 24px; background: #555; opacity: .92; }
      .nav b, .nav u { position: absolute; top: 2px; height: 4px; width: 7px; }
      .nav b { left: 2px; background: #bcbcbc; }
      .nav u { left: 14px; background: #9a9a9a; }
      .nav svg { position: absolute; left: 4px; top: 8px; width: 16px; height: 14px; }
      .attr { position: absolute; right: 9px; top: 252.5px; font-size: 3.9px; line-height: 5px; color: #2b7fbf; background: rgba(255,255,255,.45); white-space: nowrap; padding: 0 1px; }
      .coords { display: flex; height: 5px; line-height: 5px; font-size: 3.1px; color: #333; white-space: nowrap; padding-left: 1px; }
      .coords .lon { margin-left: 12px; }
      .coords .cnt { margin-left: auto; margin-right: 3px; }
    `;
  }
  markup() {
    return `
      <div class="view">
        <div class="edge"><span>Zoom</span></div>
        <svg viewBox="617 162 170 259">
          <rect x="617" y="162" width="170" height="259" fill="#aad3df"/>
          ${MAP_LAND.map((p) => `<polygon points="${p}" fill="#f2efe9" stroke="#c9c4bc" stroke-width=".3"/>`).join("")}
          ${MAP_LAKES.map((p) => `<polygon points="${p}" fill="#aad3df"/>`).join("")}
          ${MAP_BORDERS.map((p) => `<polyline points="${p}" fill="none" stroke="#b5aeb0" stroke-width=".35"/>`).join("")}
          ${MAP_LABELS.map(([x, y, t]) => svgText(x, y, t)).join("")}
          <circle cx="722" cy="265" r="2" fill="#d8455a"/>
          <rect x="731" y="252" width="11" height="12" fill="#a8a41e" opacity=".92"/>
          <rect x="733" y="254" width="6" height="7" fill="#7c7a18"/>
          <path d="M736 268l-1.6-5h3.2z" fill="#2a5a3a"/>
        </svg>
        <div class="scale">
          <div class="pan">Pan S W/L</div><div class="btn"></div>
          <span style="top:37px">400</span><span style="top:87px">300</span><span style="top:155px">200</span><span style="top:196px">100</span><span style="top:216px">50</span>
          <i></i>
        </div>
        <div class="nav"><b></b><u></u>
          <svg viewBox="0 0 16 14"><path d="M8 1l2 2H6zM8 13l2-2H6zM1 7l2-2v4zM15 7l-2-2v4z" fill="#ccc"/><circle cx="8" cy="7" r="3" fill="none" stroke="#aaa" stroke-width=".5"/></svg>
        </div>
        <div class="attr">© OpenStreetMap contributors, CC-BY-SA</div>
      </div>
      <div class="coords"><span>Latitude 74° 53' 46.8" (74.6400)</span><span class="lon">Longitude -42° 29' 10.0" (-41.4063)</span><span class="cnt">COAST</span></div>
    `;
  }
}

class QxStatusBar extends QxElement {
  styles() {
    return `
      :host { display: flex; height: 8px; background: #a9a9a9; padding: 1px 0 0 4px; box-sizing: border-box; font-size: 3.7px; line-height: 6px; color: #d8d8d8; text-align: center; }
      .tag { height: 6px; width: 23px; background: #787878; }
      .on { width: 26px; margin-left: 1px; background: #128012; color: #f0f0f0; font-weight: bold; }
    `;
  }
  markup() {
    return `<div class="tag">RtlSdr DAB</div><div class="tag on">RTL-DAB</div>`;
  }
}

const ELEMENTS = {
  "qx-radio": QxRadio,
  "qx-slider": QxSlider,
  "qx-group": QxGroup,
  "qx-title-bar": QxTitleBar,
  "qx-device-bar": QxDeviceBar,
  "qx-device-panel": QxDevicePanel,
  "qx-flags-panel": QxFlagsPanel,
  "qx-level-bar": QxLevelBar,
  "qx-spectrum": QxSpectrum,
  "qx-top-panel": QxTopPanel,
  "qx-info-strip": QxInfoStrip,
  "qx-workspace": QxWorkspace,
  "qx-service-list": QxServiceList,
  "qx-quality": QxQuality,
  "qx-tabs": QxTabs,
  "qx-tii-tab": QxTiiTab,
  "qx-options-tab": QxOptionsTab,
  "qx-dock": QxDock,
  "qx-docks": QxDocks,
  "qx-cir": QxCir,
  "qx-tii-plot": QxTiiPlot,
  "qx-constellation": QxConstellation,
  "qx-map": QxMap,
  "qx-status-bar": QxStatusBar,
};

Object.entries(ELEMENTS).forEach(([name, cls]) => customElements.define(name, cls));
</script>
</body>
</html>
